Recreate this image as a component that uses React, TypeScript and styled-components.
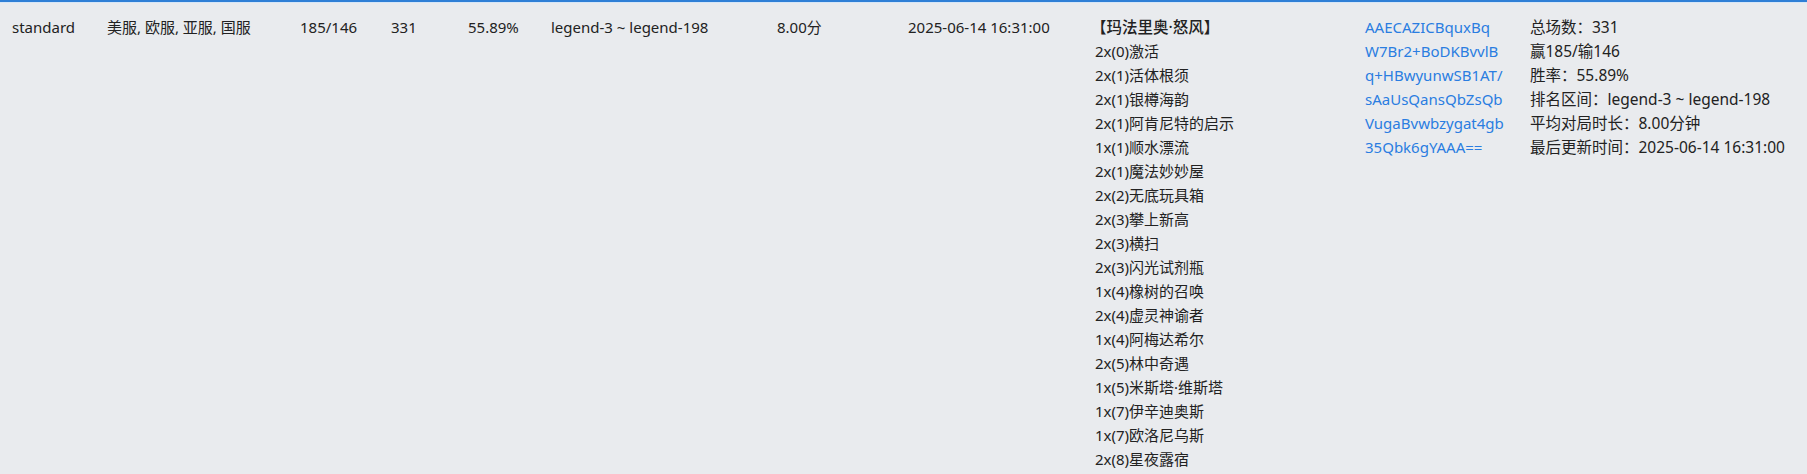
import React from "react";
import styled, { createGlobalStyle } from "styled-components";

const Global = createGlobalStyle`
  html, body { margin: 0; padding: 0; background: #e9ebee; }
  body {
    font-family: "Noto Sans", "Noto Sans CJK SC", sans-serif;
    font-size: 15px;
    color: #222;
  }
`;

const Row = styled.div`
  display: grid;
  grid-template-columns: 95px 193px 91px 77px 83px 226px 131px 187px 270px 165px 1fr;
  padding: 13px 0 0 12px;
  border-top: 2px solid #2f7fd6;
  box-shadow: inset 0 1px 0 #d6e6f7;
  line-height: 24px;
  min-height: 474px;
  box-sizing: border-box;
  align-items: start;
`;

const Cell = styled.div`
  white-space: nowrap;
`;

const DeckTitle = styled.div`
  font-weight: 500;
  margin-left: -4px;
  font-size: 15.5px;
`;

const Line = styled.div`
  white-space: nowrap;
`;

const SummaryLine = styled.div`
  white-space: nowrap;
  font-size: 15.5px;
`;

const Code = styled.div`
  color: #2a7de1;
`;

const deck = [
  "2x(0)激活",
  "2x(1)活体根须",
  "2x(1)银樽海韵",
  "2x(1)阿肯尼特的启示",
  "1x(1)顺水漂流",
  "2x(1)魔法妙妙屋",
  "2x(2)无底玩具箱",
  "2x(3)攀上新高",
  "2x(3)横扫",
  "2x(3)闪光试剂瓶",
  "1x(4)橡树的召唤",
  "2x(4)虚灵神谕者",
  "1x(4)阿梅达希尔",
  "2x(5)林中奇遇",
  "1x(5)米斯塔·维斯塔",
  "1x(7)伊辛迪奥斯",
  "1x(7)欧洛尼乌斯",
  "2x(8)星夜露宿",
];

const codeLines = [
  "AAECAZICBquxBq",
  "W7Br2+BoDKBvvlB",
  "q+HBwyunwSB1AT/",
  "sAaUsQansQbZsQb",
  "VugaBvwbzygat4gb",
  "35Qbk6gYAAA==",
];

const summary = [
  "总场数：331",
  "赢185/输146",
  "胜率：55.89%",
  "排名区间：legend-3 ~ legend-198",
  "平均对局时长：8.00分钟",
  "最后更新时间：2025-06-14 16:31:00",
];

export default function App() {
  return (
    <>
      <Global />
      <Row>
        <Cell>standard</Cell>
        <Cell>美服, 欧服, 亚服, 国服</Cell>
        <Cell>185/146</Cell>
        <Cell>331</Cell>
        <Cell>55.89%</Cell>
        <Cell>legend-3 ~ legend-198</Cell>
        <Cell>8.00分</Cell>
        <Cell>2025-06-14 16:31:00</Cell>
        <Cell>
          <DeckTitle>【玛法里奥·怒风】</DeckTitle>
          {deck.map((d) => (
            <Line key={d}>{d}</Line>
          ))}
        </Cell>
        <Cell>
          {codeLines.map((c) => (
            <Code key={c}>{c}</Code>
          ))}
        </Cell>
        <Cell>
          {summary.map((s) => (
            <SummaryLine key={s}>{s}</SummaryLine>
          ))}
        </Cell>
      </Row>
    </>
  );
}
